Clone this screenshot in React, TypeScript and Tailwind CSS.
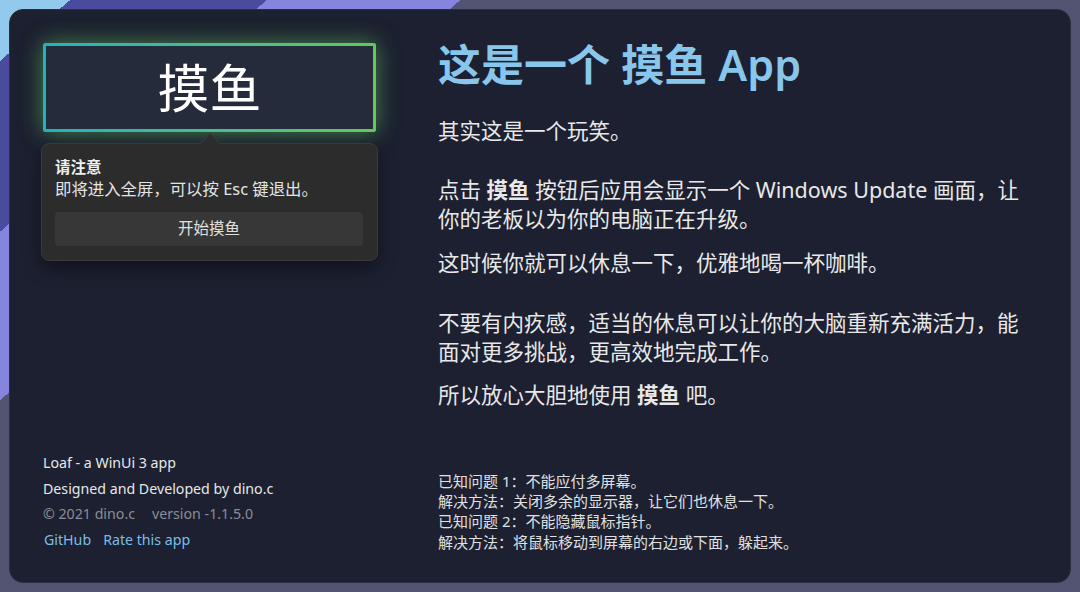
import React from 'react';

const issues = [
  '已知问题 1：不能应付多屏幕。',
  '解决方法：关闭多余的显示器，让它们也休息一下。',
  '已知问题 2：不能隐藏鼠标指针。',
  '解决方法：将鼠标移动到屏幕的右边或下面，躲起来。',
]

const LoafButton: React.FC = () => (
  <div className="rounded-[2px] bg-gradient-to-r from-[#1fb3bd] to-[#62c85a] p-[3px] shadow-[0_0_22px_rgba(98,196,90,0.6)]">
    <div className="flex h-[83px] items-center justify-center bg-[#252b3a] text-[52px] leading-none text-white">
      摸鱼
    </div>
  </div>
)

const Flyout: React.FC = () => (
  <div className="relative -mx-[2px] mt-[11px] rounded-[8px] border border-[#3a3a3a] bg-[#2c2c2c] px-[13px] pb-[14px] pt-[13px] shadow-[0_8px_18px_rgba(0,0,0,0.4)]">
    {/* beak pointing up to the button */}
    <div className="absolute -top-[8px] left-1/2 h-[14px] w-[14px] -translate-x-1/2 rotate-45 border-l border-t border-[#3a3a3a] bg-[#2c2c2c]" />
    <div className="text-[15.5px] font-bold leading-[21px] text-[#f0f0f0]">请注意</div>
    <div className="whitespace-nowrap text-[16.4px] leading-[21px] text-[#e4e4e4]">即将进入全屏，可以按 Esc 键退出。</div>
    <button className="mt-[13px] flex h-[34px] w-[308px] items-center justify-center rounded-[4px] bg-[#373737] text-[15.5px] text-[#e0e0e0]">
      开始摸鱼
    </button>
  </div>
)

export default function App() {
  return (
    <div className="h-[592px] w-[1080px] bg-[linear-gradient(139deg,#93c9ec_0px,#93c9ec_46px,#4a4a9f_46px,#4a4a9f_175px,#8585df_175px,#8585df_302px,#525472_302px)] p-[9px] font-['Noto_Sans','Noto_Sans_CJK_SC',sans-serif]">
      <div className="flex h-full rounded-[14px] border border-[#2a2e40] bg-[#1c2030] pb-[30px] pl-[33px] pr-[45px] pt-[33px]">
        {/* left column */}
        <div className="flex w-[333px] flex-col justify-between">
          <div>
            <LoafButton />
            <Flyout />
          </div>
          <div className="text-[14.2px] leading-[25.5px]">
            <div className="text-[#e8e8e8]">Loaf - a WinUi 3 app</div>
            <div className="text-[#e8e8e8]">Designed and Developed by dino.c</div>
            <div className="text-[#8a8e98]">
              © 2021 dino.c<span className="ml-[17px]">version -1.1.5.0</span>
            </div>
            <div className="text-[#7abde6]">
              <span className="ml-[1px]">GitHub</span>
              <span className="ml-[12px]">Rate this app</span>
            </div>
          </div>
        </div>

        {/* right column */}
        <div className="ml-[62px] flex flex-1 flex-col justify-between">
          <div className="text-[21.5px] leading-[29px] text-[#e8e8e8]">
            <h1 className="text-[43px] font-semibold leading-none text-[#88c6ec]">这是一个 摸鱼 App</h1>
            <p className="mt-[30px]">其实这是一个玩笑。</p>
            <p className="mt-[30px]">
              点击 <b className="font-bold">摸鱼</b> 按钮后应用会显示一个 Windows Update 画面，让你的老板以为你的电脑正在升级。
            </p>
            <p className="mt-[15px]">这时候你就可以休息一下，优雅地喝一杯咖啡。</p>
            <p className="mt-[31px]">不要有内疚感，适当的休息可以让你的大脑重新充满活力，能面对更多挑战，更高效地完成工作。</p>
            <p className="mt-[14px]">
              所以放心大胆地使用 <b className="font-bold">摸鱼</b> 吧。
            </p>
          </div>
          <div className="text-[15px] leading-[20.3px] text-[#e0e0e0]">
            {issues.map((line) => (
              <div key={line}>{line}</div>
            ))}
          </div>
        </div>
      </div>
    </div>
  )
}
